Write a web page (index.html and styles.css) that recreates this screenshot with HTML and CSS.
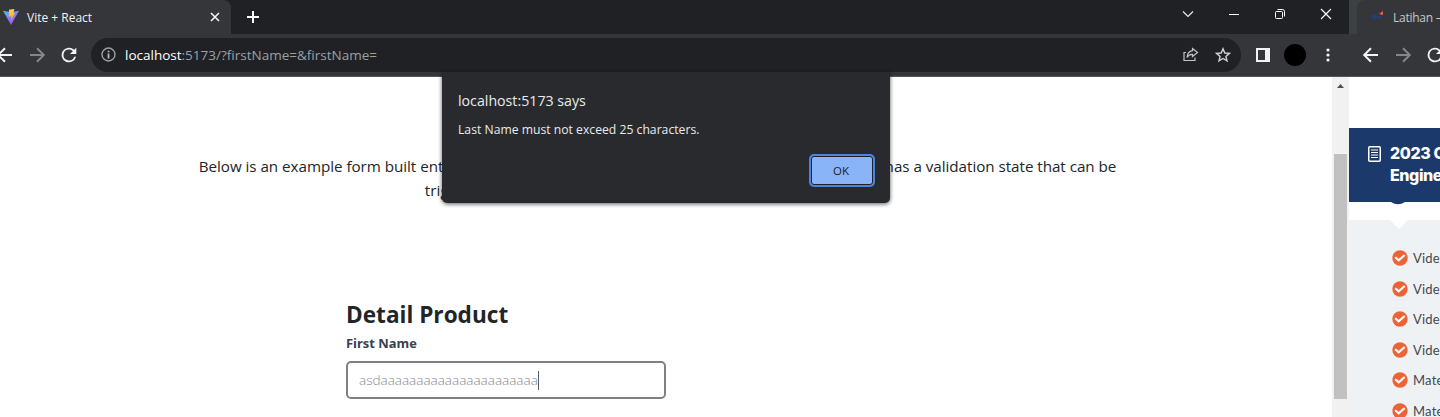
FILE: index.html
```html
<!DOCTYPE html>
<html lang="en">
<head>
<meta charset="utf-8">
<title>Vite + React</title>
<link rel="stylesheet" href="styles.css">
</head>
<body>
<svg width="0" height="0" class="defs">
  <defs>
    <linearGradient id="vite" x1="0" y1="0" x2=".6" y2="1"><stop offset="0" stop-color="#41c0ff"/><stop offset="1" stop-color="#b545f5"/></linearGradient>
    <linearGradient id="bolt" x1="0" y1="0" x2="0" y2="1"><stop offset="0" stop-color="#ffd83b"/><stop offset="1" stop-color="#ff9f10"/></linearGradient>
    <symbol id="arrow" viewBox="0 0 16 16"><path d="M1.500 8H15M8 1.200 1.200 8 8 14.800" fill="none" stroke="currentColor" stroke-width="2"/></symbol>
    <symbol id="reload" viewBox="0 0 24 24"><path fill="currentColor" d="M17.650 6.350A8 8 0 1 0 19.730 14h-2.080A6 6 0 1 1 12 6c1.660 0 3.140.690 4.220 1.780L13 11h7V4z"/></symbol>
    <symbol id="check" viewBox="0 0 16 16"><circle cx="8" cy="8" r="7.700" fill="#ec6337"/><path d="M3.200 7.200 6.700 10.300 12.700 5" fill="none" stroke="#fff" stroke-width="2.200"/></symbol>
  </defs>
</svg>
<div class="desktop">
  <section class="window">
    <header class="titlebar">
      <div class="tab">
        <svg class="logo" viewBox="0 0 16 16"><path d="M0 1.800 8 16 16 1.800 8 3.200z" fill="url(#vite)"/><path d="M6 .7 11.300 0 10.500 4.300 12 4.100 8 11.500 8.200 7.300 5.700 7.700z" fill="url(#bolt)"/></svg>
        <span class="tab-title">Vite + React</span>
        <svg class="tab-close" viewBox="0 0 10 10"><path d="M1 1 9 9M9 1 1 9" stroke="#f1f3f4" stroke-width="1.600"/></svg>
      </div>
      <svg class="new-tab" viewBox="0 0 12 12"><path d="M6 0v12M0 6h12" stroke="#fff" stroke-width="2"/></svg>
      <div class="controls">
        <svg width="12" height="8" viewBox="0 0 12 8"><path d="M1 1.500 6 6.500 11 1.500" fill="none" stroke="#e8eaed" stroke-width="1.200"/></svg>
        <svg width="12" height="12" viewBox="0 0 12 12"><path d="M1 6.500h10" stroke="#fff"/></svg>
        <svg width="12" height="12" viewBox="0 0 12 12"><rect x="1.500" y="3.500" width="7" height="7" rx="1" fill="none" stroke="#fff"/><path d="M3.500 1.500H8.500Q10.500 1.500 10.500 3.500V8.500" fill="none" stroke="#fff"/></svg>
        <svg width="12" height="12" viewBox="0 0 12 12"><path d="M1 1 11 11M11 1 1 11" stroke="#fff" stroke-width="1.200"/></svg>
      </div>
    </header>
    <div class="toolbar">
      <svg class="nav back"><use href="#arrow"/></svg>
      <svg class="nav forward"><use href="#arrow"/></svg>
      <svg class="reload"><use href="#reload"/></svg>
      <div class="omnibox">
        <svg class="info" viewBox="0 0 15 15"><circle cx="7.500" cy="7.500" r="6.500" fill="none" stroke="#9aa0a6" stroke-width="1.400"/><path d="M7.500 6.500v5M7.500 3.700v1.600" stroke="#b4b8bc" stroke-width="1.800"/></svg>
        <span class="url"><b>localhost</b>:5173/?firstName=&amp;firstName=</span>
        <svg class="share" viewBox="0 0 16 15"><path d="M3 5.500H1V13.500H12V10.500M9.500 1.500 14.500 5.500 9.500 9.500V7.300Q6 7 4 10.500 4.500 4.500 9.500 3.700z" fill="none" stroke="#c0c3c7" stroke-width="1.200"/></svg>
        <svg class="star" viewBox="0 0 16 16"><path d="M8 1.800 9.800 6 14.400 6.400 10.900 9.400 12 13.900 8 11.500 4 13.900 5.100 9.400 1.600 6.400 6.200 6z" fill="none" stroke="#d0d3d6" stroke-width="1.400"/></svg>
      </div>
      <svg class="panel" viewBox="0 0 14 14"><path fill="#f1f3f4" fill-rule="evenodd" d="M0 0h14v14H0zM2 2v10h7V2z"/></svg>
      <span class="avatar"></span>
      <svg class="dots" viewBox="0 0 4 14"><g fill="#f1f3f4"><circle cx="2" cy="2" r="1.600"/><circle cx="2" cy="7" r="1.600"/><circle cx="2" cy="12" r="1.600"/></g></svg>
    </div>
    <div class="viewport">
      <main class="page">
        <p class="lead">Below is an example form built entirely with Bootstrap’s form controls. Each required form group has a validation state that can be<br><span class="lead-second">triggered by attempting to submit the form without completing it.</span></p>
        <form class="form">
          <h2>Detail Product</h2>
          <label>First Name</label>
          <div class="field"><span>asdaaaaaaaaaaaaaaaaaaaaaa</span><i class="caret"></i></div>
        </form>
      </main>
      <div class="scrollbar">
        <svg class="scroll-up" viewBox="0 0 7 4"><path d="M0 4 3.500 0 7 4z" fill="#505050"/></svg>
        <div class="thumb"></div>
      </div>
    </div>
    <div class="dialog">
      <div class="dialog-title">localhost:5173 says</div>
      <div class="dialog-text">Last Name must not exceed 25 characters.</div>
      <button class="ok">OK</button>
    </div>
  </section>
  <section class="side">
    <header class="side-title">
      <div class="side-tab">
        <svg class="side-logo" viewBox="0 0 16 10"><path d="M1 5 5 3 9 5 14 4 12 8 8 7 5 9 3 7z" fill="#263f6c"/><path d="M10 3 14 0V4z" fill="#ed6140"/></svg>
        <span>Latihan –</span>
      </div>
    </header>
    <div class="side-toolbar">
      <svg class="nav"><use href="#arrow"/></svg>
      <svg class="nav forward"><use href="#arrow"/></svg>
      <svg class="reload"><use href="#reload"/></svg>
    </div>
    <div class="side-page">
      <div class="course">
        <svg class="doc" viewBox="0 0 13 16"><rect x=".75" y=".75" width="11.500" height="14.500" rx="1" fill="none" stroke="#fff" stroke-width="1.500"/><path d="M3 4h7M3 6.500h7M3 9h7M3 11.500h7" stroke="#fff" stroke-width="1.200"/></svg>
        <div class="course-name">2023 C<br>Engine</div>
      </div>
      <svg class="bump" viewBox="0 0 14 3"><path d="M0 0Q7 4.500 14 0z" fill="#1b3a6b"/></svg>
      <div class="lessons">
        <svg class="notch" viewBox="0 0 18 9"><path d="M0 0H18L9 9z" fill="#fff"/></svg>
        <ul>
          <li><svg><use href="#check"/></svg>Vide</li>
          <li><svg><use href="#check"/></svg>Vide</li>
          <li><svg><use href="#check"/></svg>Vide</li>
          <li><svg><use href="#check"/></svg>Vide</li>
          <li><svg><use href="#check"/></svg>Mate</li>
          <li><svg><use href="#check"/></svg>Mate</li>
        </ul>
      </div>
    </div>
  </section>
</div>
</body>
</html>
```
FILE: styles.css
```css
* { box-sizing: border-box; }
body { margin: 0; overflow: hidden; font-family: "Open Sans", "Noto Sans", sans-serif; background: #fff; }
svg { display: block; flex: none; }
.defs { position: absolute; }
.desktop { display: flex; width: 1440px; height: 417px; overflow: hidden; }
.window { position: relative; width: 1349px; flex: none; display: flex; flex-direction: column; }
.titlebar { height: 34px; flex: none; display: flex; align-items: center; background: #202124; }
.tab { width: 231px; height: 34px; display: flex; align-items: center; padding-left: 3px; background: #35363a; border-top-right-radius: 8px; }
.logo { width: 16px; height: 16px; }
.tab-title { margin-left: 8px; width: 183px; font-size: 12px; color: #f1f3f4; white-space: nowrap; }
.tab-close { width: 10px; height: 10px; }
.new-tab { width: 12px; height: 12px; margin-left: 16px; }
.controls { margin-left: auto; display: flex; align-items: center; gap: 34px; padding: 0 17px 6px 0; }
.toolbar { height: 43px; flex: none; display: flex; align-items: center; background: #35363a; border-bottom: 1px solid #565659; padding-bottom: 1px; }
.nav { width: 16px; height: 16px; color: #f1f3f4; }
.back { margin-left: -3px; }
.forward { transform: scaleX(-1); color: #85868a; margin-left: 16px; }
.reload { width: 22px; height: 22px; margin-left: 13px; color: #f1f3f4; }
.omnibox { width: 1150px; height: 34px; margin-left: 11px; border-radius: 17px; background: #202124; display: flex; align-items: center; padding: 0 10px; }
.info { width: 15px; height: 15px; }
.url { margin-left: 9px; padding-top: 1px; font-size: 13.500px; color: #9aa0a6; white-space: nowrap; }
.url b { font-weight: 400; color: #fff; }
.share { width: 16px; height: 15px; margin-left: auto; }
.star { width: 16px; height: 16px; margin-left: 16px; }
.panel { width: 14px; height: 14px; margin-left: 15px; }
.avatar { width: 22px; height: 22px; border-radius: 50%; background: #000; margin-left: 14px; }
.dots { width: 4px; height: 14px; margin-left: 20px; }
.viewport { flex: 1; display: flex; background: #fff; }
.page { width: 1332px; padding-top: 77px; }
.lead { margin: 0 17px 0 0; text-align: center; font-size: 15.200px; letter-spacing: -0.03px; line-height: 24px; color: #212529; white-space: nowrap; }
.lead-second { letter-spacing: 0.04px; }
.form { margin: 97px 0 0 346px; width: 320px; }
.form h2 { margin: 0; font-size: 22.600px; line-height: 32px; font-weight: 700; color: #212529; white-space: nowrap; }
.form label { display: block; margin-top: 2px; font-size: 12.900px; line-height: 20px; font-weight: 700; color: #374151; }
.field { height: 38px; margin-top: 8px; border: 2px solid #808080; border-radius: 5px; display: flex; align-items: center; padding-left: 11px; font-size: 13.500px; font-weight: 300; color: #858892; }
.caret { width: 1px; height: 19px; background: #555b68; }
.scrollbar { width: 17px; background: #f1f1f1; padding: 7px 2px 0; }
.scroll-up { width: 7px; height: 4px; margin-left: 3px; }
.thumb { width: 13px; height: 245px; margin-top: 66px; background: #c1c1c1; }
.dialog { position: absolute; left: 442px; top: 72px; width: 448px; height: 131px; padding: 18px 16px; background: #292a2d; border-radius: 0 0 5px 5px; box-shadow: 0 1px 4px rgba(0,0,0,.65); color: #e8eaed; display: flex; flex-direction: column; white-space: nowrap; }
.dialog-title { font-size: 14.200px; line-height: 22px; }
.dialog-text { font-size: 12.200px; line-height: 20px; margin-top: 8px; }
.ok { align-self: flex-end; width: 62px; height: 30px; margin: 16px 1px 0 0; border: 1px solid #202124; border-radius: 3px; box-shadow: 0 0 0 2px #4c84df; background: #8ab4f8; font: 11.500px "Open Sans", sans-serif; color: #202124; padding: 0 2px 0 0; }
.side { width: 91px; flex: none; overflow: hidden; display: flex; flex-direction: column; }
.side-title { height: 34px; flex: none; background: #3c4043; padding-left: 8px; }
.side-tab { width: 83px; height: 34px; display: flex; align-items: center; background: #35363a; border-top-left-radius: 8px; padding-left: 12px; font-size: 12px; letter-spacing: -0.25px; color: #c5c7ca; white-space: nowrap; overflow: hidden; }
.side-logo { width: 16px; height: 10px; margin: 0 8px 2px 0; }
.side-toolbar { height: 43px; flex: none; display: flex; align-items: center; background: #35363a; border-bottom: 1px solid #565659; padding: 0 0 1px 14px; }
.side-page { padding-top: 51px; background: #fff; flex: 1; white-space: nowrap; }
.course { height: 74px; background: #1b3a6b; color: #fff; display: flex; padding: 14px 0 0 19px; }
.doc { width: 13px; height: 16px; margin: 4px 9px 0 0; }
.course-name { font: 800 16px/22px "Inter", sans-serif; letter-spacing: -0.4px; }
.bump { width: 14px; height: 3px; margin-left: 42px; }
.lessons { margin-top: 15px; height: 197px; background: #eef2f5; }
.notch { width: 18px; height: 9px; margin-left: 41px; }
.lessons ul { list-style: none; margin: 0; padding: 14px 0 0 43px; }
.lessons li { height: 30.500px; display: flex; align-items: center; gap: 5px; font: 13px "Lato", sans-serif; letter-spacing: .2px; color: #44474d; }
.lessons li svg { width: 16px; height: 16px; }
```
